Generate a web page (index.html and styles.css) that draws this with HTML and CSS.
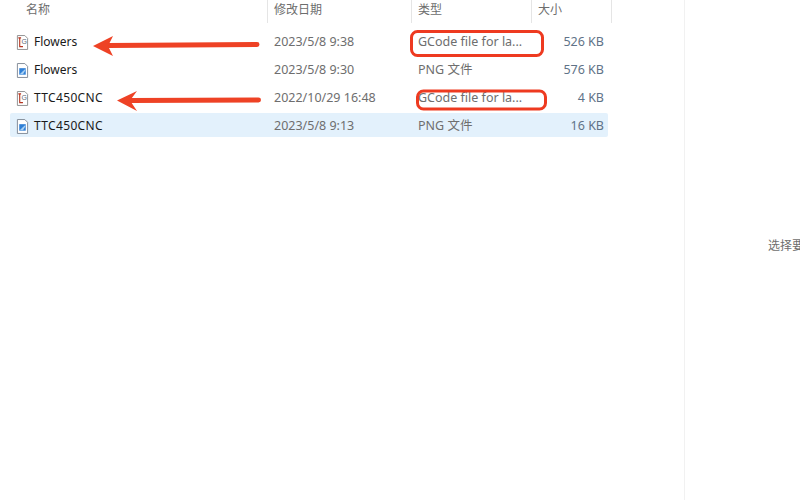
FILE: index.html
```html
<!DOCTYPE html>
<html lang="zh-CN">
<head>
  <meta charset="UTF-8" />
  <title>文件列表</title>
  <link rel="stylesheet" href="styles.css">
</head>

<body>
  <div class="window">
    <div class="list">
      <div class="head">
        <div class="head-cell name">名称</div>
        <div class="head-cell">修改日期</div>
        <div class="head-cell">类型</div>
        <div class="head-cell">大小</div>
      </div>

      <div class="rows">
        <div class="row">
          <div class="file">
            <svg class="icon" viewBox="0 0 14 16">
              <path d="M1.500 .5H9.500L12.500 3.500V15.500H1.500Z" class="page-g"/>
              <path d="M2.500 3H5.500M4 3V12.500H7.500" class="letter-l"/>
              <text x="6" y="9.500" class="letter-g">G</text>
            </svg>
            Flowers
          </div>
          <div class="cell">2023/5/8 9:38</div>
          <div class="cell">GCode file for la...</div>
          <div class="size">526 KB</div>
        </div>
        <div class="row">
          <div class="file">
            <svg class="icon" viewBox="0 0 14 16">
              <path d="M1.500 .5H9.500L12.500 3.500V15.500H1.500Z" class="page-p"/>
              <rect x="3.500" y="5.500" width="7" height="7" class="pic"/>
              <path d="M4 12L7 9L10 6.500V8L7.500 12Z" class="pic-hi"/>
            </svg>
            Flowers
          </div>
          <div class="cell">2023/5/8 9:30</div>
          <div class="cell">PNG 文件</div>
          <div class="size">576 KB</div>
        </div>
        <div class="row">
          <div class="file caps">
            <svg class="icon" viewBox="0 0 14 16">
              <path d="M1.500 .5H9.500L12.500 3.500V15.500H1.500Z" class="page-g"/>
              <path d="M2.500 3H5.500M4 3V12.500H7.500" class="letter-l"/>
              <text x="6" y="9.500" class="letter-g">G</text>
            </svg>
            TTC450CNC
          </div>
          <div class="cell">2022/10/29 16:48</div>
          <div class="cell">GCode file for la...</div>
          <div class="size">4 KB</div>
        </div>
        <div class="row selected">
          <div class="file caps">
            <svg class="icon" viewBox="0 0 14 16">
              <path d="M1.500 .5H9.500L12.500 3.500V15.500H1.500Z" class="page-p"/>
              <rect x="3.500" y="5.500" width="7" height="7" class="pic"/>
              <path d="M4 12L7 9L10 6.500V8L7.500 12Z" class="pic-hi"/>
            </svg>
            TTC450CNC
          </div>
          <div class="cell">2023/5/8 9:13</div>
          <div class="cell">PNG 文件</div>
          <div class="size">16 KB</div>
        </div>
      </div>
    </div>

    <div class="preview">选择要预览的文件。</div>
  </div>

  <!-- red markup drawn over the screenshot -->
  <svg class="markup" width="800" height="500" viewBox="0 0 800 500">
    <path d="M257 44.500L108 45.500" class="line"/>
    <path d="M93 46L113 36L108 46L113 56Z" class="arrow"/>
    <path d="M258.500 100L130 100.500" class="line"/>
    <path d="M117 100.500L137 91L130 100.500L137 111Z" class="arrow"/>
    <rect x="411.500" y="31.500" width="131" height="24" rx="6" class="box"/>
    <rect x="417.500" y="91" width="128" height="18" rx="6" class="box"/>
  </svg>
</body>
</html>
```

FILE: styles.css
```css
body {
  margin: 0;
  width: 800px;
  height: 500px;
  overflow: hidden;
  background: #fff;
  font-family: "Noto Sans", "Noto Sans CJK SC", sans-serif;
  font-size: 12px;
  color: #6e6e6e;
}
.window {
  display: flex;
  height: 500px;
}
.list {
  width: 684px;
  box-sizing: border-box;
  padding-left: 10px;
  flex-shrink: 0;
}
.head {
  display: grid;
  grid-template-columns: 258px 144px 120px 80px;
  height: 23px;
}
.head-cell {
  border-right: 1px solid #e5e5e5;
  padding-left: 6px;
  line-height: 20px;
  color: #6d6d6d;
}
.head-cell.name {
  padding-left: 16px;
}
.rows {
  display: flex;
  flex-direction: column;
  gap: 4px;
  padding-top: 6px;
}
.row {
  display: grid;
  grid-template-columns: 258px 144px 120px 76px;
  width: 598px;
  height: 24px;
  line-height: 26px;
  border-radius: 2px;
}
.row.selected {
  background: #e3f1fc;
}
.file {
  display: flex;
  align-items: center;
  gap: 5px;
  box-sizing: border-box;
  height: 24px;
  padding: 2px 0 0 6px;
  color: #1a1a1a;
}
.file.caps {
  letter-spacing: .35px;
}
.icon {
  width: 13px;
  height: 15px;
}
.page-g {
  fill: #fff;
  stroke: #8d8d8d;
}
.page-p {
  fill: #fff;
  stroke: #7d8794;
}
.letter-l {
  fill: none;
  stroke: #b5341f;
  stroke-width: 1.200;
}
.letter-g {
  font-family: "Liberation Sans", sans-serif;
  font-size: 7.500px;
  letter-spacing: 0;
  fill: #5f6b78;
}
.pic {
  fill: #2f7fd6;
}
.pic-hi {
  fill: #a9d0f2;
}
.cell {
  padding-left: 6px;
  font-size: 12.500px;
}
.size {
  text-align: right;
  padding-right: 4px;
  font-size: 12.500px;
  color: #5f7388;
}
.preview {
  flex: 1;
  min-width: 0;
  border-left: 1px solid #f1f1f1;
  box-sizing: border-box;
  padding: 237px 0 0 83px;
  line-height: 17px;
  white-space: nowrap;
  overflow: hidden;
}
.markup {
  position: absolute;
  top: 0;
  left: 0;
  pointer-events: none;
}
.line {
  fill: none;
  stroke: #ee4225;
  stroke-width: 5;
  stroke-linecap: round;
}
.arrow {
  fill: #ee4225;
}
.box {
  fill: none;
  stroke: #ee3a20;
  stroke-width: 3;
}
```
